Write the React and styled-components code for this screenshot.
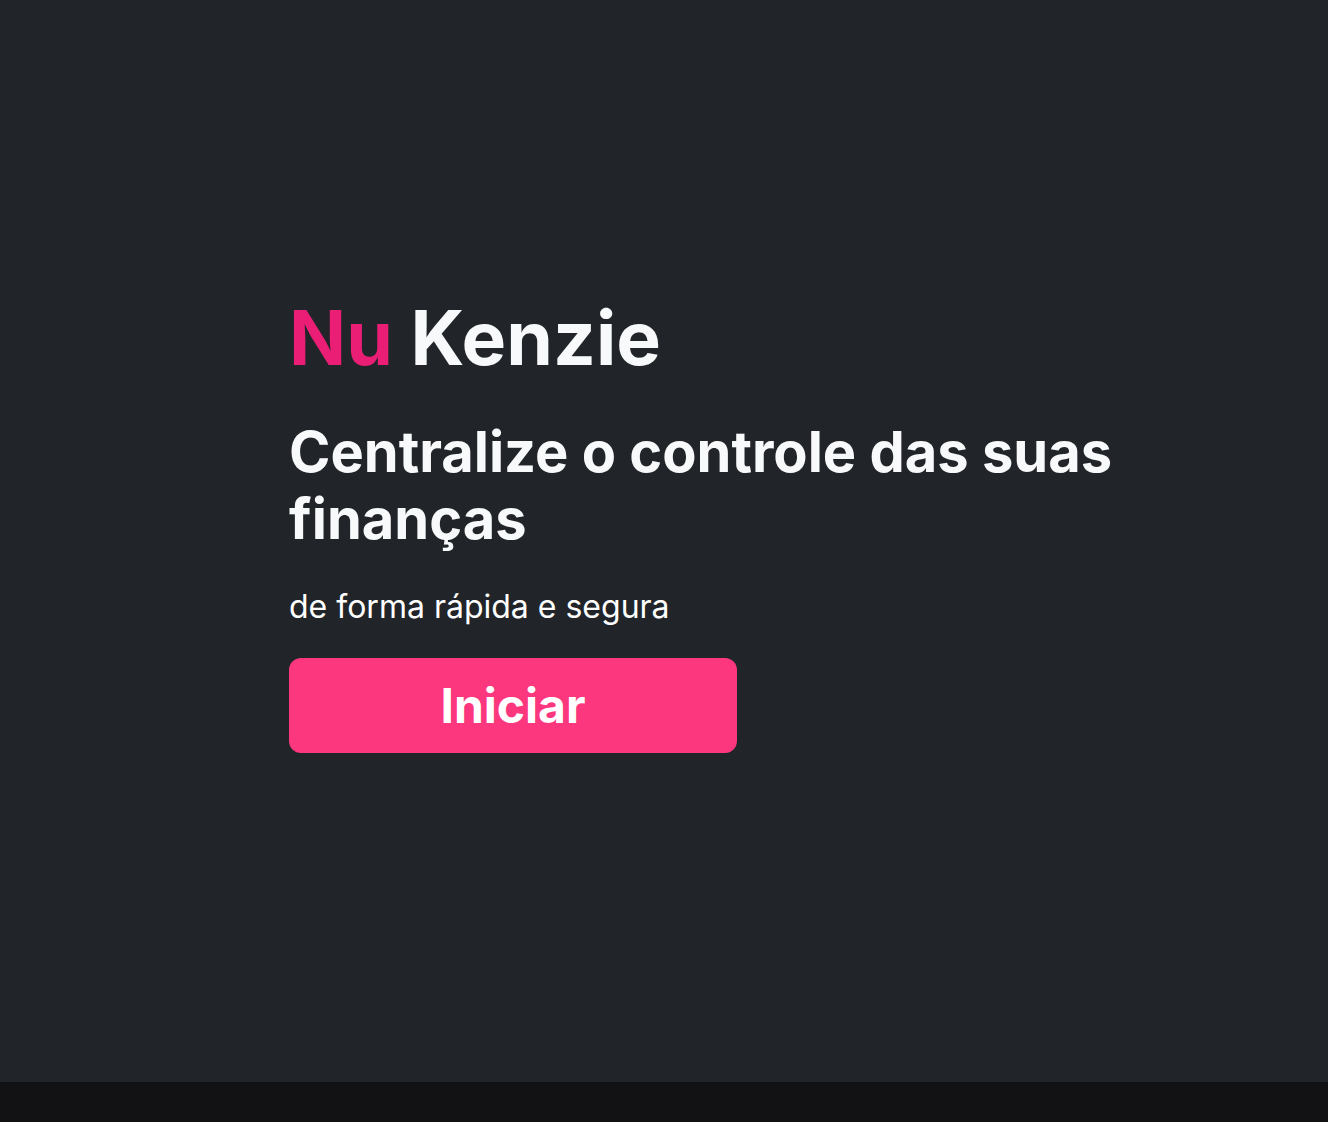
import React from "react";
import styled, { createGlobalStyle } from "styled-components";

const GlobalStyle = createGlobalStyle`
  * {
    margin: 0;
    padding: 0;
    box-sizing: border-box;
  }
  body {
    background-color: #121214;
    font-family: "Inter", "Noto Sans", sans-serif;
  }
`;

function App() {
  return (
    <>
      <GlobalStyle />
      <Wrapper>
        <div className="content">
          <h1>
            <span className="nu">Nu</span> Kenzie
          </h1>
          <h2>Centralize o controle das suas finanças</h2>
          <p>de forma rápida e segura</p>
          <Button>Iniciar</Button>
        </div>
      </Wrapper>
    </>
  );
}

const Wrapper = styled.main`
  height: 1082px;
  background-color: #212529;
  display: flex;
  align-items: center;
  padding-left: 289px;
  padding-bottom: 36px;

  .content {
    display: flex;
    flex-direction: column;
    align-items: flex-start;
    max-width: 860px;
  }

  h1 {
    font-size: 75px;
    font-weight: 700;
    color: #f8f9fa;
    line-height: 1.2;
    .nu {
      color: #e91e74;
    }
  }

  h2 {
    margin-top: 36px;
    font-size: 56px;
    font-weight: 700;
    color: #f8f9fa;
    line-height: 1.2;
  }

  p {
    margin-top: 34px;
    font-size: 32px;
    font-weight: 400;
    color: #ffffff;
  }
`;

const Button = styled.button`
  margin-top: 32px;
  width: 448px;
  height: 95px;
  border: none;
  border-radius: 12px;
  background-color: #fd377e;
  color: #ffffff;
  font-family: inherit;
  font-size: 48px;
  font-weight: 700;
  cursor: pointer;
`;

export default App;
